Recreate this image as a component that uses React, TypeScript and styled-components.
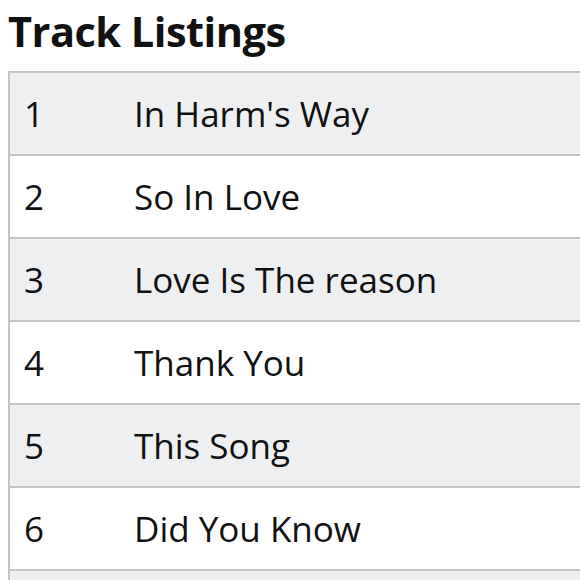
import styled, { createGlobalStyle } from "styled-components";

const GlobalStyle = createGlobalStyle`
  html, body {
    overflow: hidden;
  }
  body {
    margin: 8px 0 0 8px;
    background: #ffffff;
    font-family: "Open Sans", "Noto Sans", sans-serif;
    color: #111111;
  }
`;

const Heading = styled.h2`
  margin: 0 0 17px;
  font-size: 41.5px;
  line-height: 46px;
  font-weight: 700;
  letter-spacing: -0.5px;
  color: #111111;
`;

const Frame = styled.div`
  width: 572px;
  height: 509px;
  overflow: hidden;
`;

const Table = styled.table`
  width: 760px;
  border-collapse: collapse;
  border-left: 2px solid #c4c4c4;
`;

const Row = styled.tr<{ $shaded: boolean }>`
  background: ${(p) => (p.$shaded ? "#eeeff1" : "#ffffff")};
  border-top: 2px solid #c4c4c4;
  border-bottom: 2px solid #c4c4c4;
`;

const NumCell = styled.td`
  width: 110px;
  height: 81px;
  padding: 0 0 0 14px;
  font-size: 35px;
  vertical-align: middle;
`;

const TitleCell = styled.td`
  padding: 0;
  font-size: 35px;
  vertical-align: middle;
`;

const tracks = [
  "In Harm's Way",
  "So In Love",
  "Love Is The reason",
  "Thank You",
  "This Song",
  "Did You Know",
];

export default function App() {
  return (
    <>
      <GlobalStyle />
      <Heading>Track Listings</Heading>
      <Frame>
        <Table>
          <tbody>
            {tracks.map((t, i) => (
              <Row key={t} $shaded={i % 2 === 0}>
                <NumCell>{i + 1}</NumCell>
                <TitleCell>{t}</TitleCell>
              </Row>
            ))}
            <Row $shaded>
              <NumCell />
              <TitleCell />
            </Row>
          </tbody>
        </Table>
      </Frame>
    </>
  );
}
